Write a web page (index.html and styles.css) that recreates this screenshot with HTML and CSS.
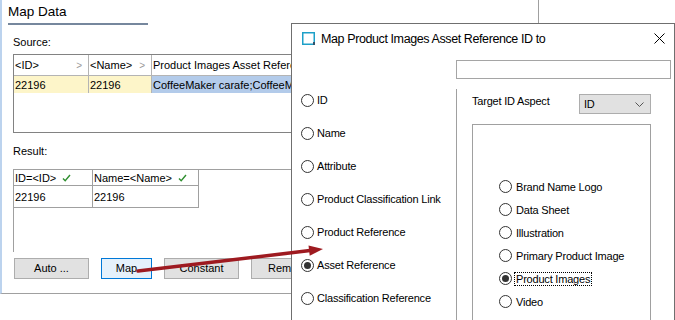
FILE: index.html
```html
<!DOCTYPE html>
<html lang="en">
<head>
    <meta charset="UTF-8" />
    <title>Map Data</title>
    <link rel="stylesheet" href="styles.css">
</head>
<body>
    <div class="screen">
        <div class="panel">
            <div class="panel-title">Map Data</div>
            <div class="label">Source:</div>
            <div class="source">
                <div class="row src-head">
                    <div class="cell c1">&lt;ID&gt;<span class="chev">&gt;</span></div>
                    <div class="cell c2">&lt;Name&gt;<span class="chev">&gt;</span></div>
                    <div class="cell c3">Product Images Asset Reference ID</div>
                </div>
                <div class="row src-data">
                    <div class="cell c1 yellow">22196</div>
                    <div class="cell c2 yellow">22196</div>
                    <div class="cell c3 picked">CoffeeMaker carafe;CoffeeMaker front</div>
                </div>
            </div>
            <div class="label label-result">Result:</div>
            <div class="result">
                <div class="row res-head">
                    <div class="rcell r1">ID=&lt;ID&gt; <svg class="ok" width="9" height="8" viewBox="0 0 9 8"><path d="M1 4.5 L3.2 6.8 L8 1" fill="none" stroke="#2f8f2f" stroke-width="1.4"/></svg></div>
                    <div class="rcell r2">Name=&lt;Name&gt; <svg class="ok" width="9" height="8" viewBox="0 0 9 8"><path d="M1 4.5 L3.2 6.8 L8 1" fill="none" stroke="#2f8f2f" stroke-width="1.4"/></svg></div>
                </div>
                <div class="row res-data">
                    <div class="rcell r1">22196</div>
                    <div class="rcell r2">22196</div>
                </div>
            </div>
            <div class="buttons">
                <div class="btn">Auto ...</div>
                <div class="btn btn-map">Map</div>
                <div class="btn">Constant</div>
                <div class="btn">Remove</div>
            </div>
        </div>

        <div class="dialog">
            <div class="titlebar">
                <svg class="win-icon" width="13" height="13" viewBox="0 0 13 13">
                    <rect x="0.75" y="0.75" width="11.5" height="11.5" fill="none" stroke="#1ea0c8" stroke-width="1.5"/>
                    <rect x="11" y="10" width="2" height="3" fill="#33526b"/>
                </svg>
                <span class="title">Map Product Images Asset Reference ID to</span>
                <svg class="close" width="11" height="11" viewBox="0 0 11 11">
                    <path d="M0.5 0.5 L10.5 10.5 M10.5 0.5 L0.5 10.5" stroke="#000" stroke-width="1"/>
                </svg>
            </div>
            <div class="field"></div>
            <div class="dlg-body">
                <div class="opts-left">
                    <div class="opt"><span class="radio"></span>ID</div>
                    <div class="opt"><span class="radio"></span>Name</div>
                    <div class="opt"><span class="radio"></span>Attribute</div>
                    <div class="opt"><span class="radio"></span>Product Classification Link</div>
                    <div class="opt"><span class="radio"></span>Product Reference</div>
                    <div class="opt"><span class="radio on"></span>Asset Reference</div>
                    <div class="opt"><span class="radio"></span>Classification Reference</div>
                </div>
                <div class="opts-right">
                    <div class="aspect">
                        <div class="aspect-label">Target ID Aspect</div>
                        <div class="select">ID
                            <svg width="9" height="5" viewBox="0 0 9 5"><path d="M0.5 0.5 L4.5 4.5 L8.5 0.5" fill="none" stroke="#555" stroke-width="1"/></svg>
                        </div>
                    </div>
                    <div class="types">
                        <div class="opt2"><span class="radio"></span>Brand Name Logo</div>
                        <div class="opt2"><span class="radio"></span>Data Sheet</div>
                        <div class="opt2"><span class="radio"></span>Illustration</div>
                        <div class="opt2"><span class="radio"></span>Primary Product Image</div>
                        <div class="opt2"><span class="radio on"></span><span class="focus">Product Images</span></div>
                        <div class="opt2"><span class="radio"></span>Video</div>
                    </div>
                </div>
            </div>
        </div>

        <svg class="arrow" width="675" height="320" viewBox="0 0 675 320">
            <line x1="138" y1="271" x2="310" y2="250.6" stroke="#9e1a20" stroke-width="3.5" stroke-linecap="round"/>
            <polygon points="323,249 309.7,255.8 308.5,245.5" fill="#9e1a20"/>
        </svg>
    </div>
</body>
</html>
```

FILE: styles.css
```css
*{
    margin:0;
    padding:0;
    box-sizing:border-box;
}
body{
    background:#fff;
    font-family:"Liberation Sans", Arial, sans-serif;
    font-size:11px;
    color:#000;
}
.screen{
    position:relative;
    width:675px;
    height:320px;
    overflow:hidden;
    background:#fff;
}

/* underlying window */
.panel{
    width:539px;
    height:294px;
    border-left:2px solid #bcd3ee;
    border-right:1px solid #a0a0a0;
    border-bottom:1px solid #a0a0a0;
    padding-left:6px;
}
.panel-title{
    width:140px;
    padding:4px 0 3px;
    line-height:16px;
    font-size:13.5px;
    border-bottom:2px solid #76879d;
}
.label{
    margin:10px 0 0 5px;
    line-height:14px;
}
.label-result{
    margin-top:11px;
}
.row{
    display:flex;
}
.source{
    margin:5px 0 0 5px;
    width:520px;
    height:79px;
    border:1px solid #828282;
    overflow:hidden;
}
.src-head{
    height:21px;
    border-bottom:1px solid #b4b4b4;
}
.src-data{
    height:17px;
}
.cell{
    display:flex;
    justify-content:space-between;
    align-items:center;
    padding:0 6px 0 1px;
    border-right:1px solid #b4b4b4;
    white-space:nowrap;
}
.c1{
    width:75px;
}
.c2{
    width:63px;
}
.c3{
    flex:1;
    border-right:none;
}
.chev{
    color:#9a9a9a;
    font-size:10px;
}
.yellow{
    background:#fdf5c9;
}
.picked{
    background:#b3cbea;
}

.result{
    margin:11px 0 0 5px;
    height:83px;
    border-top:1px solid #a0a0a0;
    border-left:1px solid #a0a0a0;
}
.res-head{
    height:16px;
}
.res-data{
    height:22px;
}
.rcell{
    display:flex;
    align-items:center;
    padding-left:1px;
    border-right:1px solid #a0a0a0;
    border-bottom:1px solid #a0a0a0;
    white-space:nowrap;
}
.r1{
    width:79px;
}
.r2{
    width:106px;
}
.ok{
    margin-left:6px;
}

.buttons{
    display:flex;
    gap:12px;
    margin:6px 0 0 6px;
}
.btn{
    width:75px;
    height:21px;
    line-height:19px;
    text-align:center;
    background:#e1e1e1;
    border:1px solid #adadad;
    white-space:nowrap;
    overflow:hidden;
}
.btn-map{
    width:51px;
    background:#e5f1fb;
    border-color:#0078d7;
}

/* dialog */
.dialog{
    position:absolute;
    left:291px;
    top:23px;
    width:384px;
    height:300px;
    border:1px solid #6f6f6f;
    border-bottom:none;
    background:#fff;
    letter-spacing:-.2px;
}
.titlebar{
    display:flex;
    align-items:center;
    height:29px;
    padding:0 9px 0 10px;
}
.win-icon{
    flex:none;
    margin-right:6px;
}
.title{
    font-size:12.5px;
    letter-spacing:-.4px;
}
.close{
    margin-left:auto;
}
.field{
    margin:7px 0 0 164px;
    width:215px;
    height:19px;
    border:1px solid #a5a5a5;
}
.dlg-body{
    display:flex;
    margin-top:10px;
}
.opts-left{
    width:164px;
    display:flex;
    flex-direction:column;
    gap:11px;
    padding-left:9px;
}
.opt{
    display:flex;
    align-items:center;
    height:22px;
    white-space:nowrap;
}
.radio{
    position:relative;
    flex:none;
    width:13px;
    height:13px;
    border:1px solid #333;
    border-radius:50%;
    margin-right:3px;
    background:#fff;
}
.radio.on::after{
    content:"";
    position:absolute;
    left:2px;
    top:2px;
    width:7px;
    height:7px;
    border-radius:50%;
    background:#333;
}
.opts-right{
    flex:1;
    height:240px;
    border-left:1px solid #a0a0a0;
    padding-left:15px;
}
.aspect{
    display:flex;
    margin-top:5px;
    height:20px;
}
.aspect-label{
    width:107px;
    line-height:14px;
}
.select{
    display:flex;
    justify-content:space-between;
    align-items:center;
    width:72px;
    height:20px;
    padding:0 6px 0 4px;
    background:#e1e1e1;
    border:1px solid #adadad;
}
.types{
    margin-top:10px;
    width:179px;
    height:220px;
    border:1px solid #a0a0a0;
    padding:50px 0 0 26px;
}
.opt2{
    display:flex;
    align-items:center;
    height:23px;
    white-space:nowrap;
}
.opt2 .radio{
    margin-right:4px;
}
.focus{
    border:1px dotted #000;
    line-height:12px;
    padding:0 1px;
    margin-left:-2px;
}

.arrow{
    position:absolute;
    left:0;
    top:0;
    pointer-events:none;
}
```
